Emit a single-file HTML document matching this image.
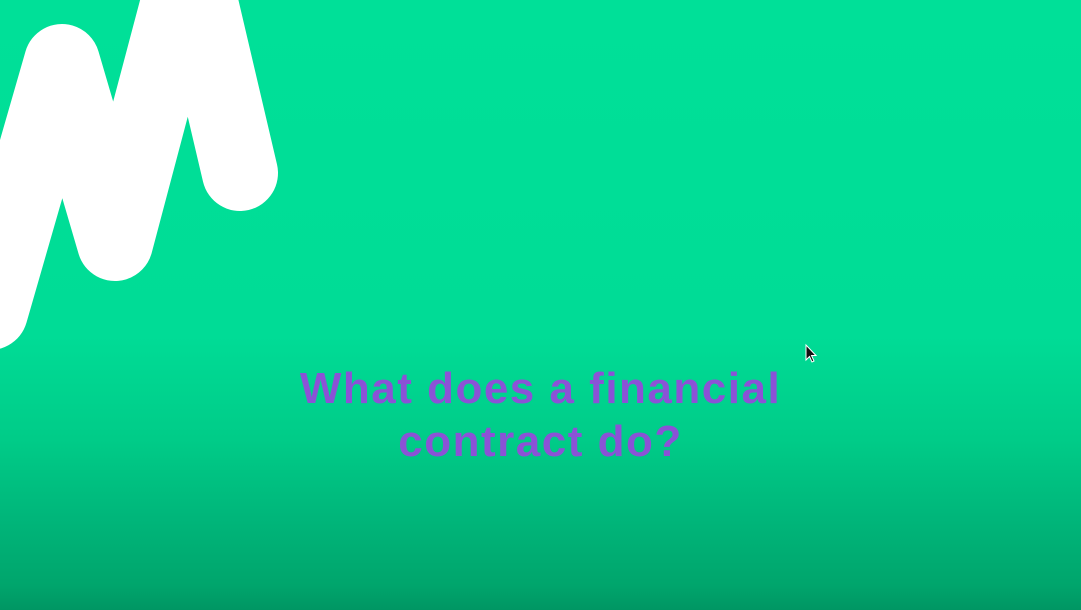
<!DOCTYPE html>
<html><head><meta charset="utf-8"><style>
html,body{margin:0;padding:0}
body{width:1081px;height:610px;overflow:hidden;position:relative;
background:linear-gradient(to bottom,#00e098 0%,#00dc96 55%,#00cc88 72%,#00b67a 85%,#00a56c 96%,#009663 100%);
font-family:"Liberation Sans",sans-serif}
.t{position:absolute;left:0;width:1081px;text-align:center;color:#8b52d6;font-size:44px;font-weight:bold;letter-spacing:1.5px;line-height:1}
</style></head><body>
<svg width="1081" height="610" style="position:absolute;left:0;top:0">
<polyline points="-10,312 62,62 115,243 190,-40 240,173" fill="none" stroke="#fff" stroke-width="76" stroke-linejoin="round" stroke-linecap="round"/>
<path d="M806,345 L806,360 L809.5,356.5 L812,362 L814,361 L811.5,355.5 L816,355.5 Z" fill="#111" stroke="#fff" stroke-width="1"/>
</svg>
<div class="t" style="top:367px">What does a financial</div>
<div class="t" style="top:420px">contract do?</div>
</body></html>
